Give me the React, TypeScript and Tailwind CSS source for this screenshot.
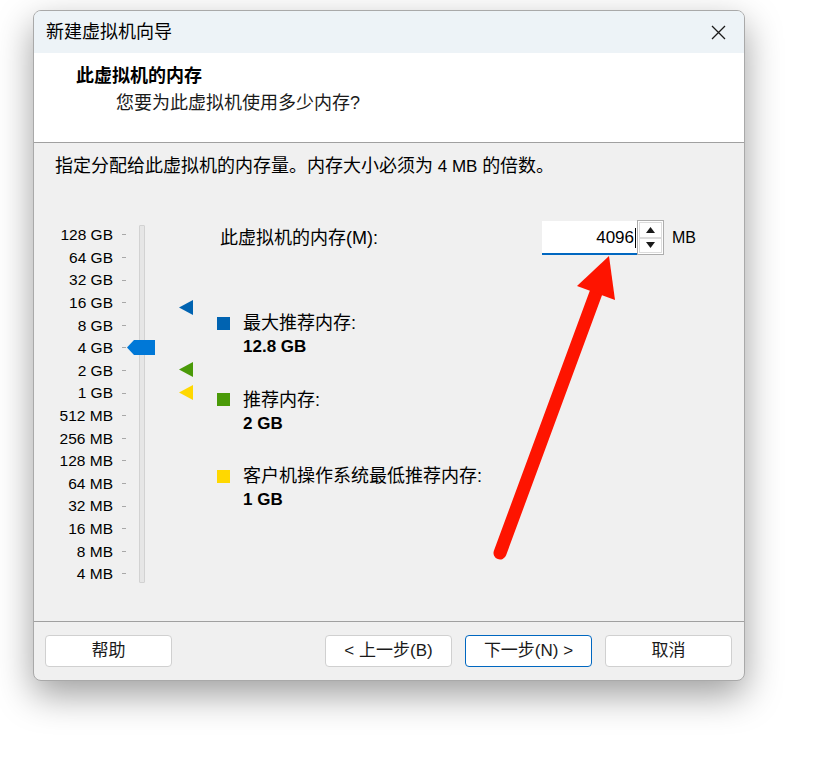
import React from 'react';

const scale = ['128 GB', '64 GB', '32 GB', '16 GB', '8 GB', '4 GB', '2 GB', '1 GB', '512 MB', '256 MB', '128 MB', '64 MB', '32 MB', '16 MB', '8 MB', '4 MB'];

const legend = [
  { color: 'bg-[#0063b1]', label: '最大推荐内存:', value: '12.8 GB' },
  { color: 'bg-[#4a9a08]', label: '推荐内存:', value: '2 GB' },
  { color: 'bg-[#ffd800]', label: '客户机操作系统最低推荐内存:', value: '1 GB' },
];

function Marker({ color, top }: { color: string; top: string }) {
  return (
    <svg className={`absolute left-0 ${top}`} width="14" height="15" viewBox="0 0 14 15">
      <polygon points="0,7.5 14,0 14,15" fill={color} />
    </svg>
  );
}

function Button({ children, primary }: { children: React.ReactNode; primary?: boolean }) {
  return (
    <button
      type="button"
      className={`flex h-[32px] w-[127px] items-center justify-center rounded-[4px] border bg-white text-[17px] text-[#1a1a1a] ${primary ? 'border-[#0067c0]' : 'border-[#d0d0d0]'}`}
    >
      {children}
    </button>
  );
}

export default function App() {
  return (
    <div className="relative h-[757px] w-[823px] overflow-hidden bg-white pt-[10px] font-['Liberation_Sans','Noto_Sans_CJK_SC',sans-serif] text-black">
      <div className="ml-[33px] flex h-[671px] w-[712px] flex-col overflow-hidden rounded-[8px] border border-[#a9a9a9] bg-[#f0f0f0] shadow-[0_14px_36px_rgba(0,0,0,0.38)]">
        {/* title bar */}
        <div className="flex h-[42px] shrink-0 items-center justify-between bg-[#edf3f7] pl-[12px] pr-[18px]">
          <span className="text-[18px] leading-6">新建虚拟机向导</span>
          <svg width="15" height="15" viewBox="0 0 15 15">
            <path d="M1 1 L14 14 M14 1 L1 14" stroke="#1a1a1a" strokeWidth="1.3" />
          </svg>
        </div>

        {/* header */}
        <div className="h-[90px] shrink-0 border-b border-[#a0a0a0] bg-white pl-[42px] pt-[11px]">
          <div className="text-[18px] font-bold leading-6">此虚拟机的内存</div>
          <div className="mt-[3px] pl-[40px] text-[18px] leading-6 text-[#1a1a1a]">您要为此虚拟机使用多少内存?</div>
        </div>

        {/* body */}
        <div className="flex-1 border-b border-[#a0a0a0] pl-[21px] pt-[11px]">
          <div className="text-[18px] leading-6">
            指定分配给此虚拟机的内存量。内存大小必须为<span className="text-[17px]"> 4 MB </span>的倍数。
          </div>

          <div className="mt-[41px] -ml-[21px] flex items-start">
            {/* slider */}
            <div className="relative flex items-start">
              <div className="pt-[3.7px]">
                {scale.map((s) => (
                  <div key={s} className="flex h-[22.6px] items-center">
                    <span className="w-[79px] text-right text-[15.5px] leading-none">{s}</span>
                    <span className="ml-[9px] h-px w-[4px] bg-[#a8a8a8]" />
                  </div>
                ))}
              </div>
              <div className="ml-[13px] mt-[5px] h-[358px] w-[6px] rounded-[1px] border border-[#d2d2d2] bg-[#e6e6e6]" />
              <svg className="absolute left-[93px] top-[120px]" width="28" height="15" viewBox="0 0 28 15">
                <polygon points="0,7.5 7,0 28,0 28,15 7,15" fill="#0078d7" />
              </svg>
            </div>

            {/* recommendation markers */}
            <div className="relative ml-[34px] h-[360px] w-[14px]">
              <Marker color="#0063b1" top="top-[80px]" />
              <Marker color="#4a9a08" top="top-[142px]" />
              <Marker color="#ffd800" top="top-[165px]" />
            </div>

            {/* memory input + legend */}
            <div className="ml-[24px] flex flex-col">
              <div className="flex h-[35px] items-center">
                <span className="w-[325px] pl-[3px] text-[18px] leading-6">此虚拟机的内存(M):</span>
                <div className="flex h-[34px] w-[95px] items-center justify-end border-b-2 border-[#0067c0] bg-white pt-[2px]">
                  <span className="text-[17px] leading-none">4096</span>
                  <span className="ml-px mr-px h-[20px] w-px bg-black" />
                </div>
                <div className="flex h-[35px] w-[27px] flex-col border border-[#adadad] bg-white p-px">
                  <div className="flex flex-1 items-center justify-center border border-[#dcdcdc]">
                    <svg width="9" height="6" viewBox="0 0 9 6"><polygon points="4.5,0 9,6 0,6" fill="#1a1a1a" /></svg>
                  </div>
                  <div className="flex flex-1 items-center justify-center border border-[#dcdcdc]">
                    <svg width="9" height="6" viewBox="0 0 9 6"><polygon points="0,0 9,0 4.5,6" fill="#1a1a1a" /></svg>
                  </div>
                </div>
                <span className="ml-[8px] text-[16px]">MB</span>
              </div>

              <div className="mt-[56px] flex flex-col gap-[28.5px]">
                {legend.map((item) => (
                  <div key={item.label} className="flex flex-col">
                    <div className="flex h-[24px] items-center">
                      <span className={`h-[13px] w-[13px] ${item.color}`} />
                      <span className="ml-[13px] text-[18px] leading-6">{item.label}</span>
                    </div>
                    <div className="flex h-[24px] items-center pl-[26px] text-[17px] font-bold">{item.value}</div>
                  </div>
                ))}
              </div>
            </div>
          </div>
        </div>

        {/* footer */}
        <div className="flex h-[58px] shrink-0 items-start justify-between pl-[11px] pr-[12px] pt-[13px]">
          <Button>帮助</Button>
          <div className="flex gap-[13px]">
            <Button>&lt; 上一步(B)</Button>
            <Button primary>下一步(N) &gt;</Button>
            <Button>取消</Button>
          </div>
        </div>
      </div>

      {/* annotation arrow */}
      <svg className="pointer-events-none absolute left-0 top-0" width="823" height="757" viewBox="0 0 823 757">
        <line x1="500" y1="553" x2="597" y2="290" stroke="#fe1400" strokeWidth="13" strokeLinecap="round" />
        <polygon points="609,256 577,286 615,300" fill="#fe1400" />
      </svg>
    </div>
  );
}
